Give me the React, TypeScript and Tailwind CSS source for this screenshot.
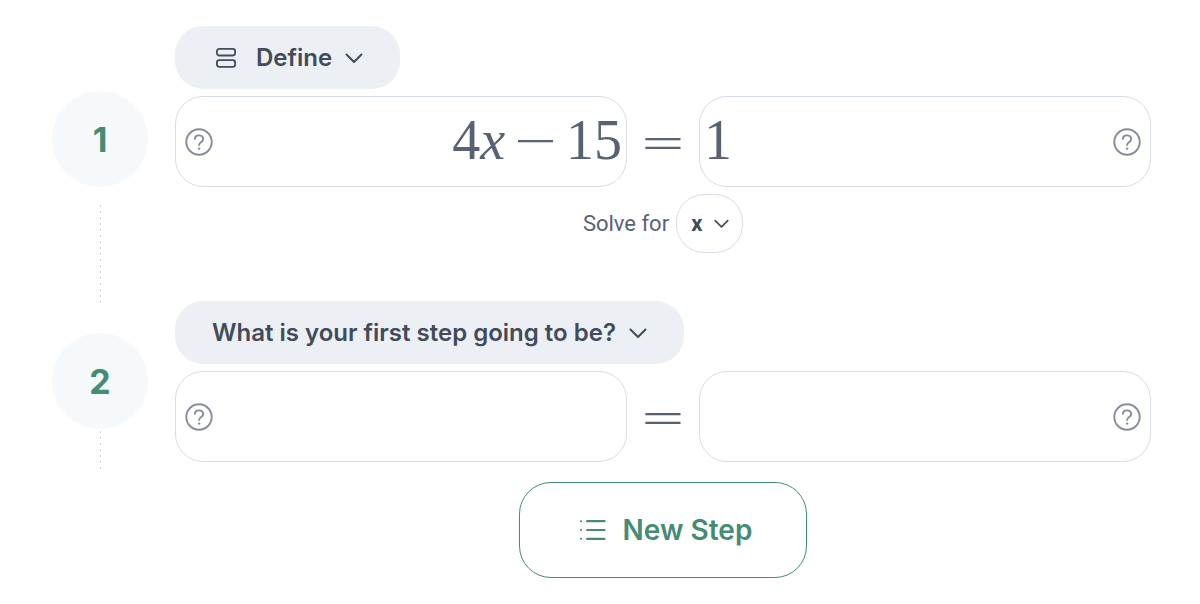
import { useState } from "react";
import type { ReactNode } from "react";

function Chevron({ className }: { className: string }) {
  return (
    <svg viewBox="0 0 18 18" fill="none" stroke="currentColor" strokeWidth="2" strokeLinecap="round" strokeLinejoin="round" className={className} aria-hidden="true">
      <path d="M1.5 5.5 9 13l7.500-7.500" />
    </svg>
  );
}

function StackIcon() {
  return (
    <svg viewBox="0 0 20 20" fill="none" stroke="currentColor" strokeWidth="1.8" className="size-5" aria-hidden="true">
      <rect x="0.9" y="0.9" width="18.2" height="6.6" rx="2.4" />
      <rect x="0.9" y="12.2" width="18.2" height="6.6" rx="2.4" />
    </svg>
  );
}

function ListIcon() {
  return (
    <svg viewBox="0 0 26 22" fill="none" stroke="currentColor" strokeWidth="2.2" strokeLinecap="round" className="h-[22px] w-[26px]" aria-hidden="true">
      <path d="M7.1 2.2h17.4M7.1 11h17.4M7.1 19.8h17.4" />
      <path d="M1 2.2h.1M1 11h.1M1 19.8h.1" strokeWidth="2" />
    </svg>
  );
}

function HelpButton() {
  return (
    <button type="button" aria-label="Help" className="shrink-0 text-[#858c9b]">
      <svg viewBox="0 0 28 28" fill="none" stroke="currentColor" strokeWidth="1.9" strokeLinecap="round" strokeLinejoin="round" className="size-7" aria-hidden="true">
        <circle cx="14" cy="14" r="12.7" />
        <path d="M9.900 10.900c.1-2.300 1.800-3.500 4.100-3.500s4.200 1.400 4.200 3.500c0 3-4.100 3-4.100 6.200" />
        <circle cx="14.100" cy="20.600" r="1.200" fill="currentColor" stroke="none" />
      </svg>
    </button>
  );
}

const mathText = "font-['Liberation_Serif',serif] text-[56px] leading-[60px] text-[#596273]";
const operator = "font-['DejaVu_Sans_Light','DejaVu_Sans',sans-serif] font-extralight";

function Field({ label, side, value, children }: { label: string; side: "left" | "right"; value?: string; children?: ReactNode }) {
  const entry = children ? (
    <div
      role="textbox"
      aria-label={label}
      contentEditable
      suppressContentEditableWarning
      className={`h-16 min-w-0 flex-1 whitespace-nowrap pb-1 text-right outline-none ${mathText}`}
    >
      {children}
    </div>
  ) : (
    <input
      aria-label={label}
      defaultValue={value}
      className={`h-16 min-w-0 flex-1 bg-transparent pb-1 outline-none ${side === "left" ? "text-right" : "text-left"} ${mathText}`}
    />
  );
  return (
    <div
      className={`flex min-w-0 items-center rounded-[28px] border border-[#d6dde4] pb-3 pt-[13px] ${side === "left" ? "pl-[9px] pr-1" : "pl-1 pr-[9px]"}`}
    >
      {side === "left" && <HelpButton />}
      {entry}
      {side === "right" && <HelpButton />}
    </div>
  );
}

function EquationRow({ children }: { children: ReactNode }) {
  return <div className="mt-[7px] grid grid-cols-[minmax(0,1fr)_72px_minmax(0,1fr)]">{children}</div>;
}

function Equals() {
  return (
    <span className={`self-center text-center text-[56px] leading-[60px] text-[#596273] ${operator}`}>=</span>
  );
}

function ActionMenu({ icon, children }: { icon?: ReactNode; children: ReactNode }) {
  return (
    <button
      type="button"
      aria-haspopup="menu"
      className="flex h-[63px] items-center rounded-[28px] bg-[#ecf0f5] px-[37px] text-2xl font-semibold text-[#424b5a]"
    >
      {icon && <span className="ml-1 mr-5">{icon}</span>}
      {children}
      <Chevron className="ml-[13px] size-[18px]" />
    </button>
  );
}

function Step({ number, marker, children }: { number: number; marker: ReactNode; children: ReactNode }) {
  return (
    <li className="flex gap-[27px]">
      <div className="flex w-24 shrink-0 flex-col items-center">{marker}</div>
      <section aria-label={`Step ${number}`} className="min-w-0 flex-1">
        {children}
      </section>
    </li>
  );
}

function Badge({ children }: { children: ReactNode }) {
  return (
    <span className="flex size-24 shrink-0 items-center justify-center rounded-full bg-[#f5f9fc] text-[34px] font-bold text-[#458c73]">
      {children}
    </span>
  );
}

const connector =
  "w-px flex-1 bg-[repeating-linear-gradient(to_bottom,#cfd2d7_0px,#cfd2d7_2px,transparent_2px,transparent_6px)]";

export default function App() {
  const [variable, setVariable] = useState("x");

  return (
    <main className="bg-white pb-[26px] pl-[52px] pr-[49px] pt-[26px] font-['Inter',sans-serif]">
      <ol>
        <Step
          number={1}
          marker={
            <>
              <div className="h-[65px] shrink-0" />
              <Badge>1</Badge>
              <div className={`-mb-0.5 mt-[18px] ${connector}`} />
            </>
          }
        >
          <ActionMenu icon={<StackIcon />}>Define</ActionMenu>
          <EquationRow>
            <Field label="Left side" side="left">
              4<i>x</i>
              <span className={`mx-[7px] ${operator}`}>−</span>15
            </Field>
            <Equals />
            <Field label="Right side" side="right" value="1" />
          </EquationRow>
          <div className="mb-12 mt-[7px] flex items-center justify-center gap-[7px] font-['Roboto',sans-serif] text-[22px] text-[#596273]">
            <label htmlFor="variable">Solve for</label>
            <div className="relative">
              <select
                id="variable"
                value={variable}
                onChange={(e) => setVariable(e.target.value)}
                className="h-[59px] w-[67px] appearance-none rounded-[28px] border border-[#d6dde4] bg-transparent pl-3.5 font-bold text-[#424b5a] outline-none"
              >
                <option value="x">x</option>
              </select>
              <Chevron className="pointer-events-none absolute right-3.5 top-[22px] size-[15px] text-[#424b5a]" />
            </div>
          </div>
        </Step>
        <Step
          number={2}
          marker={
            <>
              <div className="h-8 shrink-0" />
              <Badge>2</Badge>
              <div className={`mt-0.5 ${connector}`} />
            </>
          }
        >
          <ActionMenu>What is your first step going to be?</ActionMenu>
          <div className="pb-2">
            <EquationRow>
              <Field label="Left side" side="left" />
              <Equals />
              <Field label="Right side" side="right" />
            </EquationRow>
          </div>
        </Step>
      </ol>
      <div className="ml-[123px] mt-3 flex justify-center">
        <button
          type="button"
          className="flex h-24 w-72 items-center justify-center gap-[17px] rounded-[32px] border border-[#458c73] pl-1.5 text-[28px] font-semibold text-[#458c73]"
        >
          <ListIcon />
          New Step
        </button>
      </div>
    </main>
  );
}
